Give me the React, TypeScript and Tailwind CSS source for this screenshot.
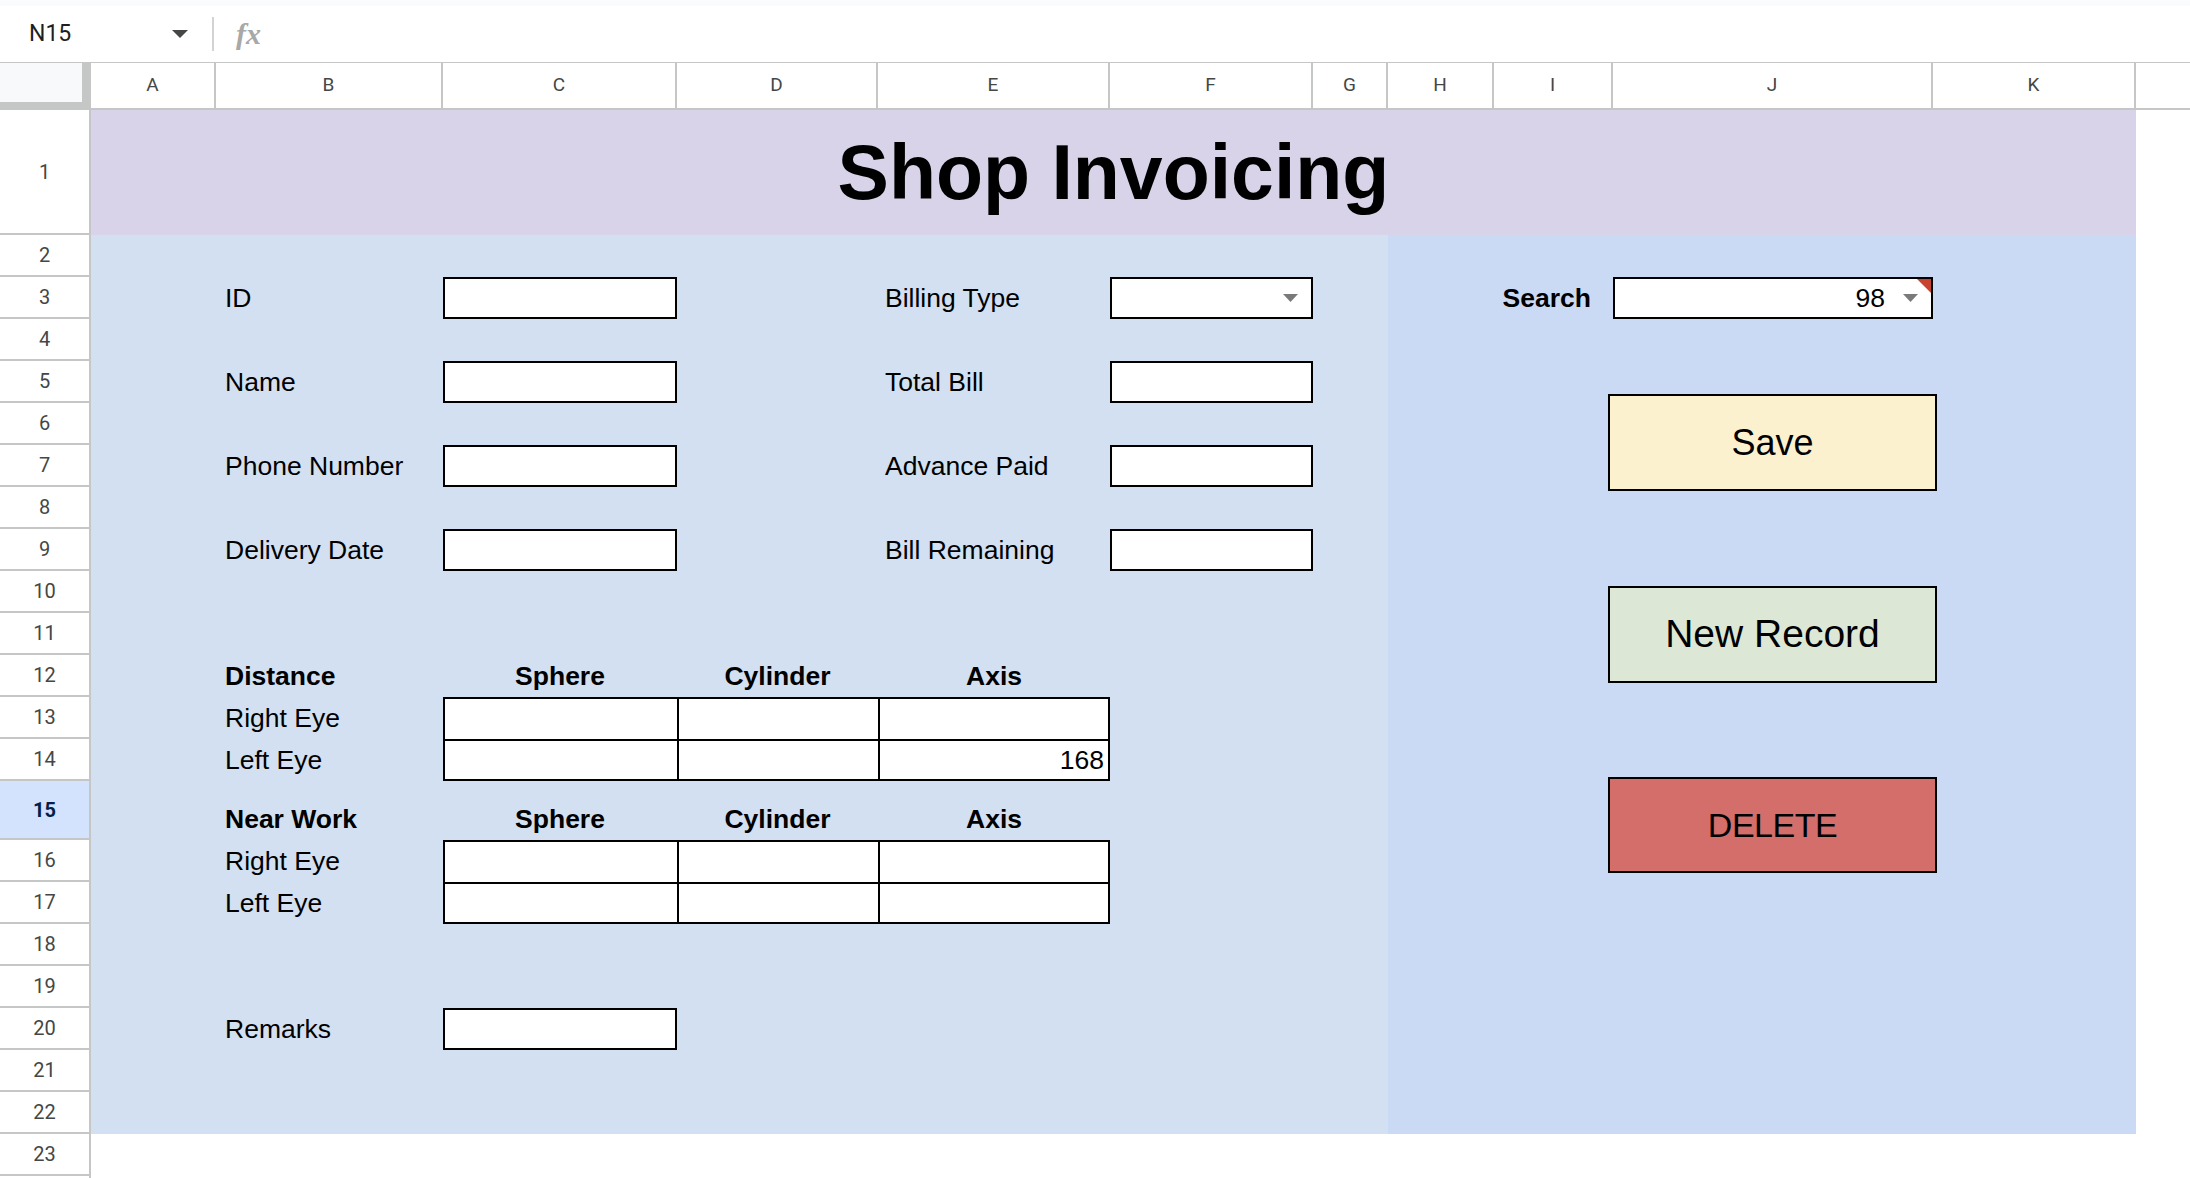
import React from 'react';

const W: Record<string, string> = {
  A: 'w-[125px]',
  B: 'w-[227px]',
  C: 'w-[234px]',
  D: 'w-[201px]',
  E: 'w-[232px]',
  F: 'w-[203px]',
  G: 'w-[75px]',
  H: 'w-[106px]',
  I: 'w-[119px]',
  J: 'w-[320px]',
  K: 'w-[203px]',
};
const COLS = ['A', 'B', 'C', 'D', 'E', 'F', 'G', 'H', 'I', 'J', 'K'];

function RowHead({ n, selected }: { n?: number; selected?: boolean }) {
  return (
    <div
      className={`w-[91px] shrink-0 h-full flex items-center justify-center border-r-2 border-b-2 border-[#c4c7c5] font-['Roboto',sans-serif] text-[20px] ${
        selected ? 'bg-[#d3e3fd] text-[#041e49] font-bold' : 'bg-white text-[#444746]'
      }`}
    >
      {n}
    </div>
  );
}

function BodyRow({
  n,
  h,
  cells = {},
  colored = true,
  selected,
}: {
  n?: number;
  h: string;
  cells?: Record<string, React.ReactNode>;
  colored?: boolean;
  selected?: boolean;
}) {
  return (
    <div className={`flex ${h}`}>
      <RowHead n={n} selected={selected} />
      {COLS.map((c, i) => (
        <div
          key={c}
          className={`${W[c]} shrink-0 h-full ${
            colored ? (i < 7 ? 'bg-[#d3e0f2]' : 'bg-[#cbdaf4]') : 'bg-white'
          }`}
        >
          {cells[c]}
        </div>
      ))}
      <div className="flex-1 h-full bg-white" />
    </div>
  );
}

function Label({ children, bold, wide }: { children: React.ReactNode; bold?: boolean; wide?: boolean }) {
  return (
    <div
      className={`h-full flex items-end pb-[6px] text-[26.5px] leading-[30px] text-black whitespace-nowrap ${
        wide ? 'pl-[9px]' : 'pl-[7px]'
      } ${bold ? 'font-bold' : ''}`}
    >
      {children}
    </div>
  );
}

function Head({ children }: { children: React.ReactNode }) {
  return (
    <div className="h-full flex items-end justify-center pb-[6px] text-[26.5px] leading-[30px] font-bold text-black whitespace-nowrap">
      {children}
    </div>
  );
}

function Box() {
  return <div className="h-full bg-white border-2 border-black" />;
}

function Tri({ cls }: { cls: string }) {
  return (
    <svg className={cls} width="15" height="8" viewBox="0 0 15 8">
      <polygon points="0,0 15,0 7.5,8" fill="#7a7a7a" />
    </svg>
  );
}

function DropBox() {
  return (
    <div className="h-full bg-white border-2 border-black flex items-center justify-end pr-[13px]">
      <Tri cls="" />
    </div>
  );
}

function SearchBox() {
  return (
    <div className="relative h-full bg-white border-2 border-black flex items-center justify-end pr-[13px]">
      <span className="text-[26.5px] leading-[30px] text-black">98</span>
      <Tri cls="ml-[18px]" />
      <svg className="absolute top-0 right-0" width="14" height="14" viewBox="0 0 14 14">
        <polygon points="0,0 14,0 14,14" fill="#c9412f" />
      </svg>
    </div>
  );
}

function SearchLabel() {
  return (
    <div className="h-full flex items-end justify-end pr-[22px] pb-[6px] text-[26.5px] leading-[30px] font-bold text-black whitespace-nowrap">
      Search
    </div>
  );
}

function TC({ cls, children }: { cls: string; children?: React.ReactNode }) {
  return (
    <div className={`h-full bg-white border-black flex items-center justify-end pr-[4px] text-[26.5px] leading-[30px] text-black ${cls}`}>
      {children}
    </div>
  );
}

export default function App() {
  return (
    <div className="w-[2190px] h-[1178px] overflow-hidden bg-white font-['Liberation_Sans',Arial,sans-serif]">
      {/* top strip */}
      <div className="h-[6px] bg-[#f9fbfd]" />
      {/* formula bar */}
      <div className="h-[56px] flex items-center bg-white">
        <div className="w-[172px] pl-[29px] font-['Roboto',sans-serif] text-[23px] text-[#1f1f1f]">N15</div>
        <svg width="16" height="8" viewBox="0 0 16 8">
          <polygon points="0,0 16,0 8,8" fill="#444746" />
        </svg>
        <div className="ml-[24px] w-[2px] h-[34px] bg-[#d3d3d3]" />
        <span className="ml-[22px] font-['Liberation_Serif',serif] italic font-bold text-[30px] leading-[30px] text-[#a8a8a8]">
          fx
        </span>
      </div>
      {/* column header */}
      <div className="flex h-[48px] border-t border-[#c4c7c5]">
        <div className="w-[91px] shrink-0 h-full bg-[#f8f9fa] border-r-[9px] border-b-[8px] border-[#c4c7c5]" />
        {COLS.map((c) => (
          <div
            key={c}
            className={`${W[c]} shrink-0 h-full flex items-center justify-center border-r-2 border-b-2 border-[#c4c7c5] bg-white font-['Roboto',sans-serif] text-[19px] text-[#444746]`}
          >
            {c}
          </div>
        ))}
        <div className="flex-1 h-full border-b-2 border-[#c4c7c5] bg-white" />
      </div>

      {/* body */}
      <div className="relative">
        <div className="flex h-[125px]">
          <RowHead n={1} />
          <div className="w-[2045px] shrink-0 h-full bg-[#d8d3e8] flex items-center justify-center">
            <span className="text-[77px] font-bold text-black leading-none">Shop Invoicing</span>
          </div>
          <div className="flex-1 h-full bg-white" />
        </div>

        <BodyRow n={2} h="h-[42px]" />
        <BodyRow
          n={3}
          h="h-[42px]"
          cells={{
            B: <Label wide>ID</Label>,
            C: <Box />,
            E: <Label>Billing Type</Label>,
            F: <DropBox />,
            I: <SearchLabel />,
            J: <SearchBox />,
          }}
        />
        <BodyRow n={4} h="h-[42px]" />
        <BodyRow
          n={5}
          h="h-[42px]"
          cells={{ B: <Label wide>Name</Label>, C: <Box />, E: <Label>Total Bill</Label>, F: <Box /> }}
        />
        <BodyRow n={6} h="h-[42px]" />
        <BodyRow
          n={7}
          h="h-[42px]"
          cells={{ B: <Label wide>Phone Number</Label>, C: <Box />, E: <Label>Advance Paid</Label>, F: <Box /> }}
        />
        <BodyRow n={8} h="h-[42px]" />
        <BodyRow
          n={9}
          h="h-[42px]"
          cells={{ B: <Label wide>Delivery Date</Label>, C: <Box />, E: <Label>Bill Remaining</Label>, F: <Box /> }}
        />
        <BodyRow n={10} h="h-[42px]" />
        <BodyRow n={11} h="h-[42px]" />
        <BodyRow
          n={12}
          h="h-[42px]"
          cells={{
            B: <Label wide bold>Distance</Label>,
            C: <Head>Sphere</Head>,
            D: <Head>Cylinder</Head>,
            E: <Head>Axis</Head>,
          }}
        />
        <BodyRow
          n={13}
          h="h-[42px]"
          cells={{
            B: <Label wide>Right Eye</Label>,
            C: <TC cls="border-t-2 border-l-2" />,
            D: <TC cls="border-t-2 border-l-2" />,
            E: <TC cls="border-t-2 border-l-2 border-r-2" />,
          }}
        />
        <BodyRow
          n={14}
          h="h-[42px]"
          cells={{
            B: <Label wide>Left Eye</Label>,
            C: <TC cls="border-t-2 border-l-2 border-b-2" />,
            D: <TC cls="border-t-2 border-l-2 border-b-2" />,
            E: <TC cls="border-t-2 border-l-2 border-r-2 border-b-2">168</TC>,
          }}
        />
        <BodyRow
          n={15}
          h="h-[59px]"
          selected
          cells={{
            B: <Label wide bold>Near Work</Label>,
            C: <Head>Sphere</Head>,
            D: <Head>Cylinder</Head>,
            E: <Head>Axis</Head>,
          }}
        />
        <BodyRow
          n={16}
          h="h-[42px]"
          cells={{
            B: <Label wide>Right Eye</Label>,
            C: <TC cls="border-t-2 border-l-2" />,
            D: <TC cls="border-t-2 border-l-2" />,
            E: <TC cls="border-t-2 border-l-2 border-r-2" />,
          }}
        />
        <BodyRow
          n={17}
          h="h-[42px]"
          cells={{
            B: <Label wide>Left Eye</Label>,
            C: <TC cls="border-t-2 border-l-2 border-b-2" />,
            D: <TC cls="border-t-2 border-l-2 border-b-2" />,
            E: <TC cls="border-t-2 border-l-2 border-r-2 border-b-2" />,
          }}
        />
        <BodyRow n={18} h="h-[42px]" />
        <BodyRow n={19} h="h-[42px]" />
        <BodyRow n={20} h="h-[42px]" cells={{ B: <Label wide>Remarks</Label>, C: <Box /> }} />
        <BodyRow n={21} h="h-[42px]" />
        <BodyRow n={22} h="h-[42px]" />
        <BodyRow n={23} h="h-[42px]" colored={false} />
        <BodyRow h="h-[42px]" colored={false} />

        {/* floating drawings (buttons) */}
        <div className="absolute left-[1608px] top-[284px] w-[329px] h-[97px] bg-[#fcf1cf] border-2 border-black flex items-center justify-center text-[36px] text-black">
          Save
        </div>
        <div className="absolute left-[1608px] top-[476px] w-[329px] h-[97px] bg-[#dce8d5] border-2 border-black flex items-center justify-center text-[39px] text-black">
          New Record
        </div>
        <div className="absolute left-[1608px] top-[667px] w-[329px] h-[96px] bg-[#d36e6b] border-2 border-black flex items-center justify-center text-[34px] tracking-[-0.5px] text-black">
          DELETE
        </div>
      </div>
    </div>
  );
}
